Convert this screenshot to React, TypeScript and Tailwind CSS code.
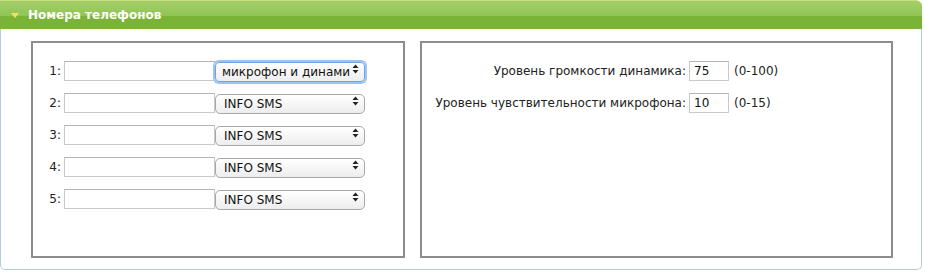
import React from 'react'

const font = { fontFamily: '"DejaVu Sans", Verdana, sans-serif' }

function Arrows() {
  return (
    <svg width="7" height="10" viewBox="0 0 7 10" className="pointer-events-none absolute right-[6px] top-[5px]">
      <path d="M0.5 4 L3.5 0.5 L6.5 4 Z" fill="#222" />
      <path d="M0.5 6 L3.5 9.5 L6.5 6 Z" fill="#222" />
    </svg>
  )
}

function PhoneRow({ n, mode, focused }: { n: number; mode: string; focused?: boolean }) {
  return (
    <div className="flex items-center h-[20px]">
      <span className="w-[31px] text-right pr-[3px] text-[12px] text-[#222]">{n}:</span>
      <input
        className="w-[151px] h-[20px] border border-[#c9c9c9] border-t-[#b3b3b3] bg-white outline-none"
        defaultValue=""
      />
      <div className="relative">
        <select
          defaultValue={mode}
          className={
            focused
              ? 'appearance-none w-[150px] h-[20px] pl-[6px] pr-[12px] text-[12px] text-[#111] rounded-[4px] border border-[#6fa2e0] bg-gradient-to-b from-white to-[#eeeeee] shadow-[0_0_0_2px_#9ec3f0] outline-none'
              : 'appearance-none w-[150px] h-[20px] pl-[8px] pr-[12px] text-[12px] text-[#111] rounded-[5px] border border-[#a8a8a8] bg-gradient-to-b from-white to-[#ededed] outline-none'
          }
          style={font}
        >
          <option>{mode}</option>
        </select>
        <Arrows />
      </div>
    </div>
  )
}

function LevelRow({ label, value, range }: { label: string; value: string; range: string }) {
  return (
    <div className="flex items-center h-[20px]">
      <span className="w-[267px] text-right pr-[3px] text-[12px] text-[#222]">{label}</span>
      <input
        className="w-[40px] h-[20px] border border-[#c9c9c9] border-t-[#b3b3b3] pl-[4px] text-[12px] text-[#111] bg-white outline-none"
        defaultValue={value}
        style={font}
      />
      <span className="pl-[5px] text-[12px] text-[#222]">{range}</span>
    </div>
  )
}

export default function App() {
  return (
    <div className="w-[925px] h-[273px] bg-white" style={font}>
      <div className="w-[922px]">
        <div className="relative h-[29px] rounded-tr-[6px] border-t border-[#c9e07a] bg-gradient-to-b from-[#a2cf6a] via-[#92c557] to-[#86bd47] flex items-center overflow-hidden">
          <div className="absolute left-0 right-0 top-[15px] bottom-0 bg-[#79b436]" />
          <div className="relative flex items-center">
            <svg width="8" height="5" viewBox="0 0 8 5" className="ml-[11px] mr-[9px]">
              <path d="M0 0 L8 0 L4 5 Z" fill="#f2e35a" />
            </svg>
            <span className="text-[12px] font-bold text-white">Номера телефонов</span>
          </div>
        </div>
        <div className="h-[241px] border border-t-0 border-[#b3cde0] rounded-b-[5px] bg-white flex gap-[15px] pl-[30px] pt-[12px]">
          <div className="w-[374px] h-[217px] border-2 border-[#8d8d8d] bg-white pt-[18px] flex flex-col gap-[12px]">
            <PhoneRow n={1} mode="микрофон и динами" focused />
            <PhoneRow n={2} mode="INFO SMS" />
            <PhoneRow n={3} mode="INFO SMS" />
            <PhoneRow n={4} mode="INFO SMS" />
            <PhoneRow n={5} mode="INFO SMS" />
          </div>
          <div className="w-[473px] h-[217px] border-2 border-[#8d8d8d] bg-white pt-[18px] flex flex-col gap-[12px]">
            <LevelRow label="Уровень громкости динамика:" value="75" range="(0-100)" />
            <LevelRow label="Уровень чувствительности микрофона:" value="10" range="(0-15)" />
          </div>
        </div>
      </div>
    </div>
  )
}
